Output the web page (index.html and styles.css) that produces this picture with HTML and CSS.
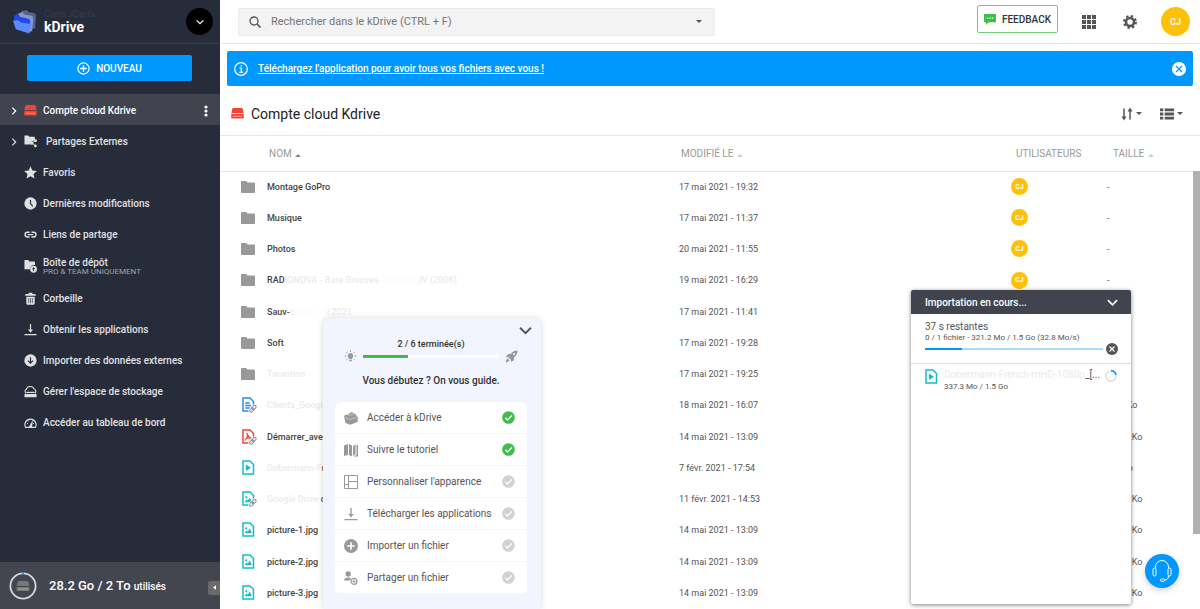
FILE: index.html
```html
<!DOCTYPE html>
<html lang="fr">
<head>
    <meta charset="UTF-8">
    <meta name="viewport" content="width=device-width, initial-scale=1.0">
    <title>kDrive</title>
    <link rel="stylesheet" href="styles.css">
</head>
<body>
<!-- icons -->
<svg class="sprite" aria-hidden="true">
    <symbol id="i-drive" viewBox="0 0 14 12"><path d="M3 0h8q1.400 0 1.800 1.400L13.600 5.400H.4l.8-4Q1.600 0 3 0zM.3 6.200h13.400v4.300q0 1-1 1H1.300q-1 0-1-1z"/><path d="M2 9h10" stroke="#fff" stroke-opacity=".5"/></symbol>
    <symbol id="i-folder" viewBox="0 0 14 12"><path d="M0 .8Q0 0 .8 0h4.400l1.300 1.500H13q1 0 1 1V11q0 1-1 1H1q-1 0-1-1z"/></symbol>
    <symbol id="i-share" viewBox="0 0 14 13"><path d="M.5 0h4l1.300 1.500H11q.7 0 .7.800V5L7 7.300v2.500H.5z"/><path d="M12 5.500 8.500 8l3.500 3" fill="none" stroke="currentColor"/><circle cx="12.400" cy="5.700" r="1.500"/><circle cx="8.500" cy="8.300" r="1.700"/><circle cx="12.200" cy="11.300" r="1.500"/></symbol>
    <symbol id="i-star" viewBox="0 0 14 14"><path d="m7 .3 2 4.500 4.900.5-3.700 3.300 1.100 4.900L7 11l-4.300 2.500 1.100-4.900L.1 5.300 5 4.800z"/></symbol>
    <symbol id="i-clock" viewBox="0 0 14 14"><circle cx="7" cy="7" r="6.600"/><path d="M7 3.300V7l2.400 3" fill="none" stroke="#272c3a" stroke-width="1.200"/></symbol>
    <symbol id="i-link" viewBox="0 0 14 14"><path d="M6 4.500H3.700a2.600 2.600 0 0 0 0 5.200H6M8 4.500h2.300a2.600 2.600 0 0 1 0 5.200H8M4 7.100h6" fill="none" stroke="currentColor" stroke-width="1.500"/></symbol>
    <symbol id="i-depot" viewBox="0 0 14 14"><path d="M.5 0h4l1.300 1.500H11q.8 0 .8.800v3.200Q6.500 5.200 6.400 10H.5z"/><circle cx="10.300" cy="10" r="3.700"/><path d="M10.300 12V8.500M8.800 9.800l1.500-1.500 1.500 1.500" fill="none" stroke="#272c3a"/></symbol>
    <symbol id="i-trash" viewBox="0 0 14 14"><path d="M2 2.200h3V.9h4v1.300h3q.7 0 .7 1v.9H1.300v-.9q0-1 .7-1zM2.500 5h9v7.500q0 1.200-1.100 1.200H3.600q-1.100 0-1.100-1.200z"/><path d="M5 6.500V12M7 6.500V12M9 6.500V12" stroke="#272c3a" stroke-width=".7"/></symbol>
    <symbol id="i-down" viewBox="0 0 14 14"><path d="M7 1v8M.5 12.600h13" fill="none" stroke="currentColor" stroke-width="1.300"/><path d="M4.300 7h5.400L7 10.500z"/></symbol>
    <symbol id="i-import" viewBox="0 0 14 14"><circle cx="7" cy="7" r="6.600"/><path d="M7 3.500v6M4.300 7.200 7 9.900l2.700-2.700" fill="none" stroke="#272c3a" stroke-width="1.300"/></symbol>
    <symbol id="i-storage" viewBox="0 0 14 14"><path d="M2.200 9A2.600 2.600 0 0 1 2.600 4.500 4.500 4.500 0 0 1 11 4.400 2.700 2.700 0 0 1 11.800 9" fill="none" stroke="currentColor" stroke-width="1.200"/><path d="M3 7.300h8l.8 1.400H2.200zM.5 9.800h13v3.500H.5z"/></symbol>
    <symbol id="i-gauge" viewBox="0 0 14 14"><path d="M1.800 12.300A6 6 0 1 1 12.200 12.300z" fill="none" stroke="currentColor" stroke-width="1.200"/><path d="M3.300 8h1M4.500 5 5.200 5.700M9.700 8h1.200" stroke="currentColor"/><path d="M5.300 11.800 9.600 4l-.9 7.800z"/></symbol>
    <symbol id="i-chevron" viewBox="0 0 12 12"><path d="m1 3.500 5 5 5-5" fill="none" stroke="currentColor" stroke-width="1.800"/></symbol>
    <symbol id="i-plus" viewBox="0 0 14 14"><circle cx="7" cy="7" r="6" fill="none" stroke="currentColor" stroke-width="1.300"/><path d="M7 3.500v7M3.500 7h7" stroke="currentColor" stroke-width="1.400"/></symbol>
    <symbol id="i-doc" viewBox="0 0 16 16"><path d="M2 1h7l3.500 3.500V14H2z" fill="none" stroke="currentColor" stroke-width="1.500"/></symbol>
    <symbol id="i-clip" viewBox="0 0 16 16"><g fill="none" stroke="#fff" stroke-width="2.600"><ellipse cx="13" cy="10.500" rx="2.400" ry="1.500" transform="rotate(-48 13 10.500)"/><ellipse cx="10.700" cy="13" rx="2.400" ry="1.500" transform="rotate(-48 10.700 13)"/></g><g fill="none" stroke="#888"><ellipse cx="13" cy="10.500" rx="2.400" ry="1.500" transform="rotate(-48 13 10.500)"/><ellipse cx="10.700" cy="13" rx="2.400" ry="1.500" transform="rotate(-48 10.700 13)"/></g></symbol>
    <symbol id="i-text" viewBox="0 0 16 16"><use href="#i-doc"/><path d="M4.200 6h4.600M4.200 8.500h6M4.200 11h4.600" stroke="currentColor" stroke-width="1.300"/><use href="#i-clip"/></symbol>
    <symbol id="i-pdf" viewBox="0 0 16 16"><use href="#i-doc"/><path d="M5.500 4q1.500 3.800 5 5.500M6.500 5.500Q6.500 9 4 11.500M4.500 10q3-1.800 6-.8" fill="none" stroke="currentColor" stroke-width="1.200"/><use href="#i-clip"/></symbol>
    <symbol id="i-video" viewBox="0 0 16 16"><use href="#i-doc"/><path d="m4.800 4.600 5.200 3.200-5.200 3.200z"/></symbol>
    <symbol id="i-image" viewBox="0 0 16 16"><use href="#i-doc"/><circle cx="5.200" cy="6.300" r="1.100"/><path d="m3.500 11.300 2-2.700 1.300 1.200L8.700 6.500l2.300 4.800z"/></symbol>
    <symbol id="i-check" viewBox="0 0 14 14"><circle cx="7" cy="7" r="6.800"/><path d="m3.500 7.300 2.500 2.400 4.700-5" fill="none" stroke="#fff" stroke-width="1.400"/></symbol>
</svg>

<div class="app">
    <aside class="sidebar">
        <div class="brand">
            <svg class="logo" viewBox="0 0 25 25"><path d="m9 1 5-1 2 2 6 1 2 2-1 14-4 1L9 15z" fill="#55648f"/><path d="m5 4 5-2 2 3 8 1 1 2-1 14-3 1z" fill="#8498cf"/><path d="m1 6 4-2 2 3 9 2 2 2-1 12L2 18z" fill="#2447e8"/><path d="m0 11 6 0 2 2 11 1.500-2 10L3 20z" fill="#5b8cff"/></svg>
            <div class="brand-text">
                <span class="account">Carta JCarta</span>
                <span class="product">kDrive</span>
            </div>
            <button class="switcher" aria-label="Changer de compte"><svg viewBox="0 0 12 12"><use href="#i-chevron"/></svg></button>
        </div>
        <button class="new"><svg><use href="#i-plus"/></svg>NOUVEAU</button>
        <nav>
            <a href="#" class="item active"><svg class="caret"><use href="#i-chevron"/></svg><svg class="ico red"><use href="#i-drive"/></svg>Compte cloud Kdrive<svg class="dots" viewBox="0 0 4 12"><circle cx="2" cy="2" r="1.600"/><circle cx="2" cy="6" r="1.600"/><circle cx="2" cy="10" r="1.600"/></svg></a>
            <a href="#" class="item"><svg class="caret"><use href="#i-chevron"/></svg><svg class="ico wide"><use href="#i-share"/></svg>Partages Externes</a>
            <a href="#" class="item"><span class="caret"></span><svg class="ico"><use href="#i-star"/></svg>Favoris</a>
            <a href="#" class="item"><span class="caret"></span><svg class="ico"><use href="#i-clock"/></svg>Dernières modifications</a>
            <a href="#" class="item"><span class="caret"></span><svg class="ico"><use href="#i-link"/></svg>Liens de partage</a>
            <a href="#" class="item two-lines"><span class="caret"></span><svg class="ico"><use href="#i-depot"/></svg><span>Boîte de dépôt<small>PRO &amp; TEAM UNIQUEMENT</small></span></a>
            <a href="#" class="item"><span class="caret"></span><svg class="ico"><use href="#i-trash"/></svg>Corbeille</a>
            <a href="#" class="item"><span class="caret"></span><svg class="ico"><use href="#i-down"/></svg>Obtenir les applications</a>
            <a href="#" class="item"><span class="caret"></span><svg class="ico"><use href="#i-import"/></svg>Importer des données externes</a>
            <a href="#" class="item"><span class="caret"></span><svg class="ico"><use href="#i-storage"/></svg>Gérer l'espace de stockage</a>
            <a href="#" class="item"><span class="caret"></span><svg class="ico"><use href="#i-gauge"/></svg>Accéder au tableau de bord</a>
        </nav>
        <div class="quota">
            <svg class="ring" viewBox="0 0 28 28"><circle cx="14" cy="14" r="12.600" fill="none" stroke="#d8d8d8" stroke-width="1.800"/><path d="M13 1.400h2" stroke="#0098ff" stroke-width="2"/><path d="M9 9h10l1.500 5h-13zM7.500 15h13v4h-13z" fill="#777"/><path d="M9 17h10" stroke="#aaa"/></svg>
            <span class="used">28.2 Go / 2 To <small>utilisés</small></span>
            <button class="collapse" aria-label="Réduire"><svg viewBox="0 0 4 6"><path d="M4 0v6L0 3z"/></svg></button>
        </div>
    </aside>

    <main>
        <header class="topbar">
            <div class="search">
                <svg class="loupe" viewBox="0 0 12 12"><circle cx="5" cy="5" r="4" fill="none" stroke="#555" stroke-width="1.300"/><path d="m8 8 3.500 3.500" stroke="#555" stroke-width="1.600"/></svg>
                <input type="text" placeholder="Rechercher dans le kDrive (CTRL + F)" aria-label="Rechercher">
                <span class="arrow"></span>
            </div>
            <div class="tools">
                <button class="feedback"><svg viewBox="0 0 13 12"><path d="M0 0h13v9H5l-3 3V9H0z" fill="#3dbd4a"/><path d="M3 4.500h1.500M5.700 4.500h1.500M8.500 4.500H10" stroke="#fff" stroke-width="1.300"/></svg>FEEDBACK</button>
                <button class="plain" aria-label="Applications"><svg class="apps" viewBox="0 0 14 14"><path d="M0 0h4v4H0zM5 0h4v4H5zM10 0h4v4h-4zM0 5h4v4H0zM5 5h4v4H5zM10 5h4v4h-4zM0 10h4v4H0zM5 10h4v4H5zM10 10h4v4h-4z"/></svg></button>
                <button class="plain" aria-label="Paramètres"><svg class="gear" viewBox="0 0 14 14"><circle cx="7" cy="7" r="4" fill="none" stroke="currentColor" stroke-width="2.600"/><circle cx="7" cy="7" r="5.900" fill="none" stroke="currentColor" stroke-width="2.200" stroke-dasharray="2.320 2.320"/></svg></button>
                <button class="avatar big">CJ</button>
            </div>
        </header>

        <div class="banner">
            <svg viewBox="0 0 14 14"><circle cx="7" cy="7" r="6.300" fill="none" stroke="#fff" stroke-width="1.200"/><path d="M5.500 6H7.300v4.200M5.300 10.300h3.800M7.200 3v1.500" fill="none" stroke="#fff" stroke-width="1.200"/></svg>
            <a href="#">Téléchargez l'application pour avoir tous vos fichiers avec vous !</a>
            <button class="plain close" aria-label="Fermer"><svg viewBox="0 0 14 14"><circle cx="7" cy="7" r="7" fill="#fff"/><path d="m4 4 6 6M10 4l-6 6" stroke="#0098ff" stroke-width="1.200"/></svg></button>
        </div>

        <div class="heading">
            <svg class="ico red"><use href="#i-drive"/></svg>
            <h1>Compte cloud Kdrive</h1>
            <button class="plain" aria-label="Trier"><svg class="sort" viewBox="0 0 12 14"><path d="M3 1.500v9M9 12.500V4" stroke="currentColor" stroke-width="1.500"/><path d="M.5 9.500h5L3 13.500zM6.500 4.500h5L9 .5z"/></svg><span class="arrow"></span></button>
            <button class="plain" aria-label="Affichage"><svg class="list" viewBox="0 0 15 14"><path d="M0 1h3.500v3H0zM5 1h10v3H5zM0 5.500h3.500v3H0zM5 5.500h10v3H5zM0 10h3.500v3H0zM5 10h10v3H5z"/></svg><span class="arrow"></span></button>
        </div>

        <div class="files">
            <table>
                <thead>
                    <tr><th class="c-icon"></th><th class="c-name">NOM <i class="up on"></i></th><th class="c-date">MODIFIÉ LE <i class="up"></i></th><th class="c-user">UTILISATEURS</th><th class="c-size">TAILLE <i class="up"></i></th></tr>
                </thead>
                <tbody>
                    <tr><td><svg class="folder"><use href="#i-folder"/></svg></td><td>Montage GoPro</td><td>17 mai 2021 - 19:32</td><td><span class="avatar">CJ</span></td><td>-</td></tr>
                    <tr><td><svg class="folder"><use href="#i-folder"/></svg></td><td>Musique</td><td>17 mai 2021 - 11:37</td><td><span class="avatar">CJ</span></td><td>-</td></tr>
                    <tr><td><svg class="folder"><use href="#i-folder"/></svg></td><td>Photos</td><td>20 mai 2021 - 11:55</td><td><span class="avatar">CJ</span></td><td>-</td></tr>
                    <tr><td><svg class="folder"><use href="#i-folder"/></svg></td><td>RAD<span class="faded">IONOVA - Rare Grooves</span><span class="gone"> From Vol</span><span class="faded">.IV (2006)</span></td><td>19 mai 2021 - 16:29</td><td><span class="avatar">CJ</span></td><td>-</td></tr>
                    <tr><td><svg class="folder"><use href="#i-folder"/></svg></td><td>Sauv-<span class="faded">c</span><span class="gone">loud ma</span><span class="faded">i 2021</span></td><td>17 mai 2021 - 11:41</td><td></td><td></td></tr>
                    <tr><td><svg class="folder"><use href="#i-folder"/></svg></td><td>Soft</td><td>17 mai 2021 - 19:28</td><td></td><td></td></tr>
                    <tr><td><svg class="folder"><use href="#i-folder"/></svg></td><td><span class="faded">Tarantino</span></td><td>17 mai 2021 - 19:25</td><td></td><td></td></tr>
                    <tr><td><svg class="file blue"><use href="#i-text"/></svg></td><td><span class="faded">Clients_Google</span></td><td>18 mai 2021 - 16:07</td><td></td><td>6.28 Ko</td></tr>
                    <tr><td><svg class="file red"><use href="#i-pdf"/></svg></td><td>Démarrer_avec_kDrive</td><td>14 mai 2021 - 13:09</td><td></td><td>29.12 Ko</td></tr>
                    <tr><td><svg class="file"><use href="#i-video"/></svg></td><td><span class="faded">Dobermann-F</span>rench</td><td>7 févr. 2021 - 17:54</td><td></td><td>1.5 Go</td></tr>
                    <tr><td><svg class="file"><use href="#i-image"/><use href="#i-clip"/></svg></td><td><span class="faded">Google Drive</span> copie</td><td>11 févr. 2021 - 14:53</td><td></td><td>45.30 Ko</td></tr>
                    <tr><td><svg class="file"><use href="#i-image"/></svg></td><td>picture-1.jpg</td><td>14 mai 2021 - 13:09</td><td></td><td>84.22 Ko</td></tr>
                    <tr><td><svg class="file"><use href="#i-image"/></svg></td><td>picture-2.jpg</td><td>14 mai 2021 - 13:09</td><td></td><td>61.05 Ko</td></tr>
                    <tr><td><svg class="file"><use href="#i-image"/></svg></td><td>picture-3.jpg</td><td>14 mai 2021 - 13:09</td><td></td><td>73.48 Ko</td></tr>
                </tbody>
            </table>
            <div class="scrollbar"></div>
        </div>
    </main>

    <!-- onboarding -->
    <section class="guide">
        <button class="plain fold" aria-label="Réduire"><svg><use href="#i-chevron"/></svg></button>
        <p class="steps">2 / 6 terminée(s)</p>
        <div class="progress">
            <svg viewBox="0 0 14 14"><path d="M7 3.300a3 3 0 0 1 2 5.200L8.600 10H5.400L5 8.500a3 3 0 0 1 2-5.200zM5.600 10.700h2.800v1.500H5.600z"/><path d="M7 0v2M.5 6.500h2M11.500 6.500h2M2.200 2l1.400 1.400M11.800 2l-1.400 1.400M2.500 10.800l1.200-1M11.500 10.800l-1.200-1" stroke="currentColor"/></svg>
            <div class="track"><div class="bar" style="width: 33%"></div></div>
            <svg viewBox="0 0 14 14"><path d="M13.500.5Q9 .5 6.500 4L3 4.600 1 7.500l2.500.3L6.300 10.500l.3 2.500 2.900-2 .5-3.500Q13.500 5 13.500.5zM2.800 9l2.200 2.200L1.500 13.500.5 12.500z"/><circle cx="9.800" cy="4.200" r="1.100" fill="#f2f5fd"/></svg>
        </div>
        <h2>Vous débutez ? On vous guide.</h2>
        <ul>
            <li><svg viewBox="0 0 14 14"><path d="M0 5 2 3.500l2 .5 1-1.500L8 1l2 1.500 2 1L12.500 5 14 6l-.5 5L6 13.800 1.500 12z"/><path d="m1 6 4 2.500L13 6.500M4.500 4.500 10 3" fill="none" stroke="#ddd" stroke-width=".6"/></svg>Accéder à kDrive<svg class="done"><use href="#i-check"/></svg></li>
            <li><svg viewBox="0 0 14 14"><path d="M0 2.500 4 1v11l-4 1zM5 1l3 1.500v11L5 12zM12.500 2H14v11.500H9l3.500-1.500z"/><path d="M9 3.500 11.500 1v10L9 13z"/></svg>Suivre le tutoriel<svg class="done"><use href="#i-check"/></svg></li>
            <li><svg viewBox="0 0 14 14"><path d="M.5.500h13v13H.5zM4.500.5v13M4.500 6.500h9M.5 9.500h4" fill="none" stroke="currentColor"/></svg>Personnaliser l'apparence<svg class="todo"><use href="#i-check"/></svg></li>
            <li><svg><use href="#i-down"/></svg>Télécharger les applications<svg class="todo"><use href="#i-check"/></svg></li>
            <li><svg viewBox="0 0 14 14"><circle cx="7" cy="7" r="7"/><path d="M7 3.300v7.400M3.300 7h7.400" stroke="#fff" stroke-width="1.600"/></svg>Importer un fichier<svg class="todo"><use href="#i-check"/></svg></li>
            <li><svg viewBox="0 0 14 14"><circle cx="4.200" cy="3" r="2.700"/><path d="M0 9.500Q.5 6.500 4.200 6.500q1.800 0 2.800.7L5.700 9.500z"/><circle cx="10" cy="10.300" r="3" fill="none" stroke="currentColor" stroke-width="1.200"/><path d="M10 8.700v3.200M8.400 10.300h3.200" stroke="currentColor"/></svg>Partager un fichier<svg class="todo"><use href="#i-check"/></svg></li>
        </ul>
    </section>

    <!-- upload window -->
    <section class="upload">
        <header>Importation en cours...<button class="plain" aria-label="Réduire"><svg><use href="#i-chevron"/></svg></button></header>
        <div class="summary">
            <p class="left">37 s restantes</p>
            <p>0 / 1 fichier - 321.2 Mo / 1.5 Go (32.8 Mo/s)</p>
            <div class="total">
                <div class="track"><div class="bar" style="width: 21%"></div></div>
                <button class="plain" aria-label="Annuler"><svg viewBox="0 0 12 12"><circle cx="6" cy="6" r="6" fill="#555"/><path d="m3.500 3.500 5 5M8.500 3.500l-5 5" stroke="#fff" stroke-width="1.200"/></svg></button>
            </div>
        </div>
        <div class="entry">
            <svg class="file"><use href="#i-video"/></svg>
            <div class="entry-text"><p><span class="faded">Dobermann-French-mHD-1080p</span>_[...</p><p>337.3 Mo / 1.5 Go</p></div>
            <svg class="spin" viewBox="0 0 12 12"><circle cx="6" cy="6" r="5.200" fill="none" stroke="#ddd" stroke-width="1.300"/><path d="M6 .8A5.200 5.200 0 0 1 11 5" fill="none" stroke="#0098ff" stroke-width="1.600"/></svg>
        </div>
    </section>

    <button class="help" aria-label="Aide"><svg viewBox="0 0 20 22"><path d="M3.500 8V7a6.500 6.500 0 0 1 13 0v1M16.500 16q0 4-4.500 4.200" fill="none" stroke="#fff"/><rect x="1" y="8" width="3" height="8" rx="1.500" fill="none" stroke="#fff"/><rect x="16" y="8" width="3" height="8" rx="1.500" fill="none" stroke="#fff"/><rect x="8.500" y="19" width="4" height="2.400" rx="1.200" fill="none" stroke="#fff"/></svg></button>
</div>
</body>
</html>
```
FILE: styles.css
```css
*, *::before, *::after {
    box-sizing: border-box;
}
body {
    margin: 0;
    font-family: Roboto, "Liberation Sans", sans-serif;
    font-size: 9px;
    color: #333;
    background: #fff;
}
button {
    font-family: inherit;
    border: none;
    cursor: pointer;
    padding: 0;
}
p, h1, h2, ul {
    margin: 0;
    padding: 0;
}
svg {
    fill: currentColor;
    flex: none;
    display: block;
}
.sprite {
    position: absolute;
    width: 0;
    height: 0;
}
.app {
    position: relative;
    display: flex;
    height: 100vh;
    overflow: hidden;
}
.plain {
    display: flex;
    align-items: center;
    background: none;
    color: #555;
}
.red {
    color: #f44336;
}

/* sidebar */
.sidebar {
    flex: none;
    display: flex;
    flex-direction: column;
    width: 220px;
    background: #272c3a;
    color: #e0e0e2;
}
.brand {
    display: flex;
    align-items: center;
    height: 44px;
    padding: 0 7px 0 13px;
    border-bottom: 1px solid #3a3f4c;
}
.logo {
    width: 24px;
    height: 24px;
}
.brand-text {
    display: flex;
    flex-direction: column;
    flex: 1;
    margin-left: 7px;
}
.account {
    font-size: 9px;
    line-height: 10px;
    color: #363b49;
}
.product {
    font-size: 14px;
    line-height: 16px;
    font-weight: bold;
    color: #fff;
}
.switcher {
    display: flex;
    align-items: center;
    justify-content: center;
    width: 27px;
    height: 27px;
    border-radius: 50%;
    background: #000;
    color: #fff;
}
.switcher svg {
    width: 8px;
    height: 8px;
}
.new {
    display: flex;
    flex: none;
    align-items: center;
    justify-content: center;
    gap: 6px;
    height: 26px;
    margin: 11px 28px 13px 27px;
    border-radius: 2px;
    background: #0098ff;
    color: #fff;
    font-size: 10px;
    font-weight: 500;
}
.new svg {
    width: 13px;
    height: 13px;
}
nav {
    flex: 1;
}
.item {
    display: flex;
    align-items: center;
    height: 31px;
    padding: 2px 12px 0 10px;
    color: inherit;
    font-size: 10px;
    font-weight: 500;
    text-decoration: none;
}
.item.active {
    background: #41444f;
    color: #fff;
}
.two-lines {
    height: 33px;
}
.caret {
    width: 8px;
    height: 8px;
    margin-right: 6px;
    transform: rotate(-90deg);
}
.ico {
    width: 13px;
    height: 13px;
    margin-right: 6px;
}
.wide {
    margin-right: 9px;
}
.dots {
    width: 4px;
    height: 12px;
    margin-left: auto;
}
.item small {
    display: block;
    font-size: 8px;
    line-height: 8px;
    font-weight: normal;
    color: #a0a3ab;
}
.quota {
    display: flex;
    align-items: center;
    height: 47px;
    padding-left: 9px;
    background: #43454f;
    color: #fff;
}
.ring {
    width: 28px;
    height: 28px;
}
.used {
    flex: 1;
    margin-left: 12px;
    font-size: 13px;
    font-weight: 500;
}
.used small {
    font-size: 10px;
}
.collapse {
    display: flex;
    align-items: center;
    justify-content: center;
    width: 12px;
    height: 14px;
    margin-top: 4px;
    border-radius: 2px 0 0 2px;
    background: #6a6a6a;
    color: #fff;
}
.collapse svg {
    width: 3px;
    height: 5px;
}

/* top bar */
main {
    flex: 1;
    min-width: 0;
}
.topbar {
    display: flex;
    align-items: center;
    justify-content: space-between;
    height: 44px;
    padding: 0 10px 0 18px;
    border-bottom: 1px solid #e8e8e8;
}
.search {
    display: flex;
    align-items: center;
    width: 477px;
    height: 28px;
    padding: 0 12px 0 10px;
    border: 1px solid #ececec;
    border-radius: 2px;
    background: #f3f3f3;
}
.loupe {
    width: 12px;
    height: 12px;
}
.search input {
    flex: 1;
    margin-left: 10px;
    padding: 0;
    border: none;
    outline: none;
    background: none;
    font-family: inherit;
    font-size: 11px;
}
.search input::placeholder {
    color: #757575;
}
.arrow {
    border: 3px solid transparent;
    border-top-color: #555;
    border-bottom: none;
}
.tools {
    display: flex;
    align-items: center;
    gap: 24px;
}
.feedback {
    display: flex;
    align-items: center;
    gap: 6px;
    height: 28px;
    padding: 0 6px;
    margin-bottom: 5px;
    border: 1px solid #6fce78;
    border-radius: 2px;
    background: #fff;
    color: #333;
    font-size: 10px;
    font-weight: 500;
}
.feedback svg {
    width: 12px;
    height: 11px;
}
.apps, .gear {
    width: 14px;
    height: 14px;
}
.gear {
    margin-left: 3px;
}
.avatar {
    display: flex;
    align-items: center;
    justify-content: center;
    width: 17px;
    height: 17px;
    border-radius: 50%;
    background: #ffc107;
    color: #fff;
    font-size: 7px;
    font-weight: bold;
}
.avatar.big {
    width: 29px;
    height: 29px;
    font-size: 9px;
}

/* banner and title */
.banner {
    display: flex;
    align-items: center;
    height: 35px;
    margin: 7px 7px 0;
    padding: 0 7px;
    border-radius: 2px;
    background: #0098ff;
}
.banner svg {
    width: 14px;
    height: 14px;
}
.banner a {
    flex: 1;
    margin-left: 10px;
    color: #fff;
    font-size: 10px;
    font-weight: 500;
}
.heading {
    display: flex;
    align-items: center;
    height: 50px;
    padding: 6px 17px 0 11px;
    border-bottom: 1px solid #e8e8e8;
}
h1 {
    flex: 1;
    font-size: 14px;
    font-weight: normal;
    color: #222;
}
.heading .ico {
    margin-right: 7px;
}
.heading .plain {
    gap: 3px;
    margin-left: 18px;
}
.sort {
    width: 12px;
    height: 14px;
}
.list {
    width: 14px;
    height: 14px;
}

/* files */
.files {
    position: relative;
}
table {
    width: 100%;
    table-layout: fixed;
    border-collapse: collapse;
}
th {
    height: 35px;
    padding: 0 0 0 2px;
    border-bottom: 1px solid #e8e8e8;
    color: #999;
    font-size: 10px;
    font-weight: normal;
    text-align: left;
    white-space: nowrap;
}
.c-icon { width: 47px; }
.c-date { width: 332px; }
.c-user { width: 96px; padding-left: 5px; }
.c-size { width: 93px; padding-left: 6px; }
.up {
    display: inline-block;
    margin-left: 1px;
    border: 3px solid transparent;
    border-bottom-color: #ccc;
    border-top: none;
}
.up.on {
    border-bottom-color: #888;
}
td {
    height: 31px;
    padding: 0;
    color: #555;
    white-space: nowrap;
}
tr:nth-child(4n) td {
    height: 32px;
}
td:first-child {
    padding-left: 21px;
}
td:nth-child(2) {
    color: #444;
    font-weight: 500;
}
.folder {
    width: 14px;
    height: 12px;
    color: #999;
}
.file {
    width: 16px;
    height: 16px;
    color: #14bccb;
}
.file.blue { color: #2b8cf0; }
.file.red { color: #f44336; }
.faded {
    color: #ebebeb;
}
.gone {
    color: #fcfcfc;
}
.scrollbar {
    position: absolute;
    top: 35px;
    right: 0;
    width: 7px;
    height: 363px;
    background: #b0b0b0;
}

/* onboarding */
.guide {
    position: absolute;
    left: 323px;
    bottom: 0;
    width: 218px;
    padding: 20px 14px 15px 12px;
    border-radius: 6px 6px 0 0;
    background: #f2f5fd;
    box-shadow: 0 0 6px rgba(0, 0, 0, 0.15);
}
.fold {
    position: absolute;
    top: 6px;
    right: 9px;
}
.fold svg {
    width: 13px;
    height: 13px;
}
.steps {
    line-height: 12px;
    font-weight: 500;
    text-align: center;
}
.progress {
    display: flex;
    align-items: center;
    gap: 6px;
    margin: 0 9px;
    color: #999;
}
.progress svg {
    width: 13px;
    height: 13px;
}
.progress .track {
    flex: 1;
    height: 3px;
    background: #fff;
}
.progress .bar {
    height: 3px;
    background: #3dbd4a;
}
h2 {
    margin: 11px 0 14px;
    font-size: 10px;
    line-height: 14px;
    font-weight: 500;
    text-align: center;
}
.guide ul {
    border-radius: 6px;
    overflow: hidden;
    list-style: none;
}
.guide li {
    display: flex;
    align-items: center;
    height: 32px;
    padding: 0 12px 0 9px;
    border-bottom: 1px solid #f2f5fd;
    background: #fff;
    color: #555;
    font-size: 10px;
}
.guide li svg {
    width: 14px;
    height: 14px;
    margin-right: 9px;
    color: #999;
}
.guide li .done, .guide li .todo {
    width: 13px;
    height: 13px;
    margin: 0 0 0 auto;
    color: #d2d2d2;
}
.guide li .done {
    color: #3dbd4a;
}

/* upload window */
.upload {
    position: absolute;
    right: 69px;
    bottom: 5px;
    width: 220px;
    height: 314px;
    border-radius: 2px;
    background: #fff;
    color: #555;
    box-shadow: 0 1px 4px rgba(0, 0, 0, 0.5);
}
.upload header {
    display: flex;
    align-items: center;
    justify-content: space-between;
    height: 24px;
    padding: 0 13px 0 14px;
    border-radius: 2px 2px 0 0;
    background: #41444f;
    color: #fff;
    font-size: 10px;
    font-weight: 500;
}
.upload header svg {
    width: 11px;
    height: 11px;
    color: #fff;
}
.summary {
    height: 50px;
    padding: 7px 13px 0 14px;
    border-bottom: 1px solid #ddd;
    font-size: 8px;
    line-height: 10px;
}
.summary .left {
    font-size: 10px;
    line-height: 12px;
}
.total {
    display: flex;
    align-items: center;
    gap: 3px;
}
.total svg {
    width: 12px;
    height: 12px;
}
.total .track {
    flex: 1;
    height: 2px;
    background: #a8d9ff;
}
.total .bar {
    height: 2px;
    background: #0098ff;
}
.entry {
    display: flex;
    padding: 5px 14px 0 13px;
    font-size: 8px;
    line-height: 12px;
}
.entry-text {
    flex: 1;
    margin-left: 4px;
}
.entry-text p:first-child {
    font-size: 10px;
}
.entry .spin {
    width: 12px;
    height: 12px;
    margin-top: 1px;
}
.help {
    position: absolute;
    right: 21px;
    bottom: 21px;
    display: flex;
    align-items: center;
    justify-content: center;
    width: 34px;
    height: 34px;
    border-radius: 50%;
    background: #0098ff;
    box-shadow: 0 2px 6px rgba(0, 0, 0, 0.2);
}
.help svg {
    width: 20px;
    height: 22px;
}
```
